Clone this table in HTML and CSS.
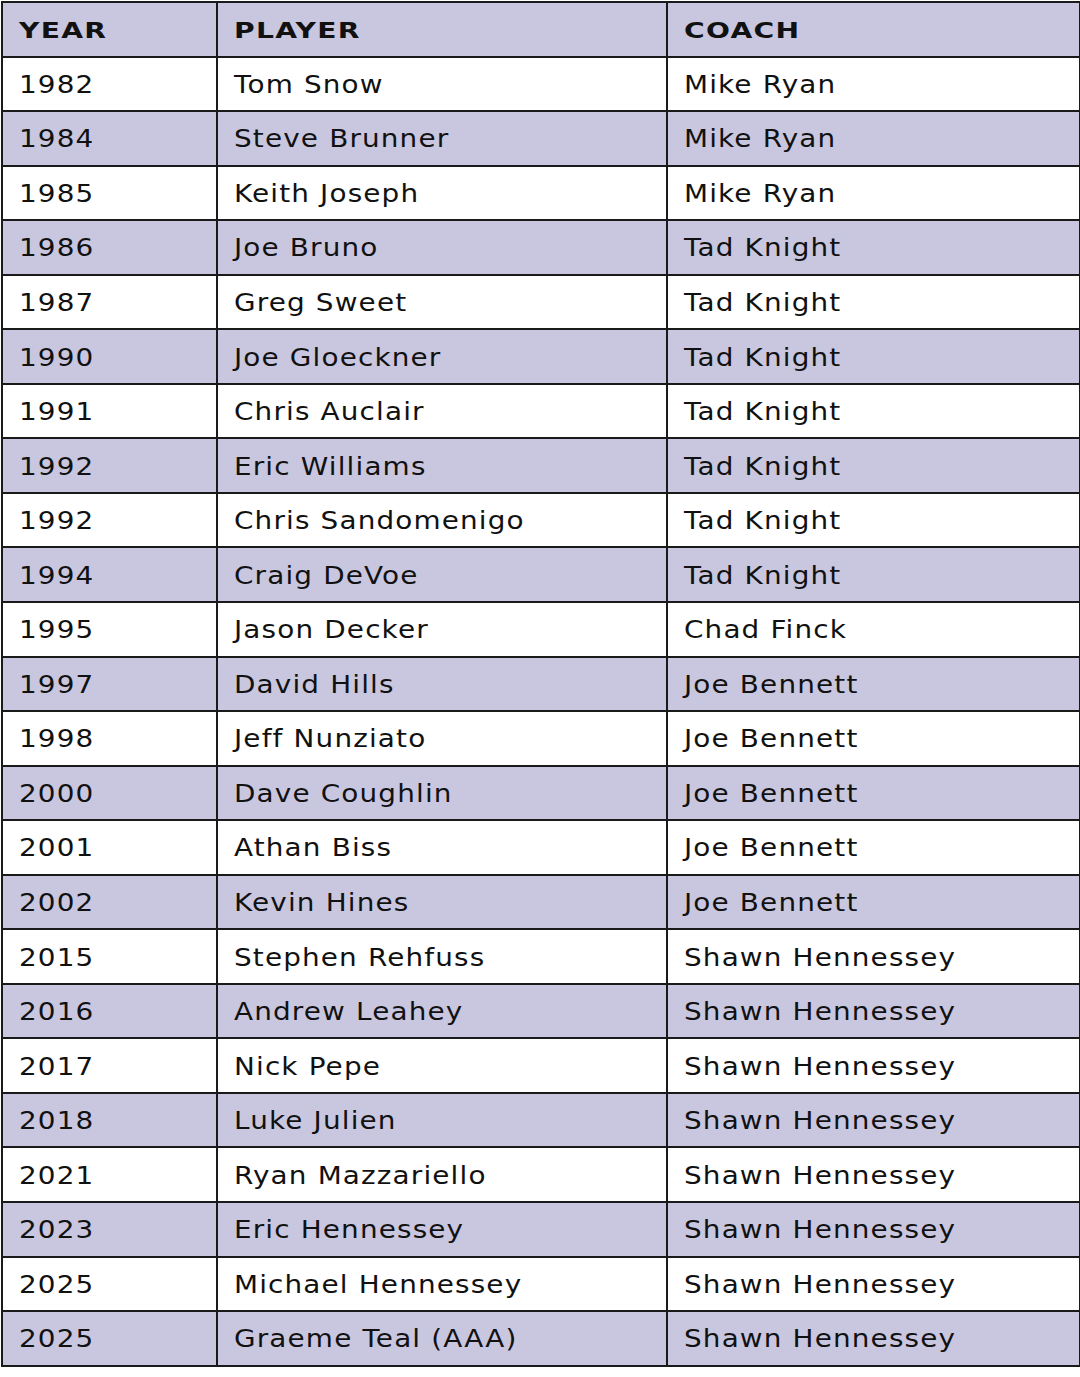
FILE: index.html
```html
<!DOCTYPE html>
<html>
<head>
<meta charset="utf-8">
<link rel="stylesheet" href="styles.css">
</head>
<body>
<table class="roster">
<colgroup><col class="c-year"><col class="c-player"><col class="c-coach"></colgroup>
<thead>
<tr><th><span class="t">YEAR</span></th><th><span class="t">PLAYER</span></th><th><span class="t">COACH</span></th></tr>
</thead>
<tbody>
<tr><td><span class="t">1982</span></td><td><span class="t">Tom Snow</span></td><td><span class="t">Mike Ryan</span></td></tr>
<tr><td><span class="t">1984</span></td><td><span class="t">Steve Brunner</span></td><td><span class="t">Mike Ryan</span></td></tr>
<tr><td><span class="t">1985</span></td><td><span class="t">Keith Joseph</span></td><td><span class="t">Mike Ryan</span></td></tr>
<tr><td><span class="t">1986</span></td><td><span class="t">Joe Bruno</span></td><td><span class="t">Tad Knight</span></td></tr>
<tr><td><span class="t">1987</span></td><td><span class="t">Greg Sweet</span></td><td><span class="t">Tad Knight</span></td></tr>
<tr><td><span class="t">1990</span></td><td><span class="t">Joe Gloeckner</span></td><td><span class="t">Tad Knight</span></td></tr>
<tr><td><span class="t">1991</span></td><td><span class="t">Chris Auclair</span></td><td><span class="t">Tad Knight</span></td></tr>
<tr><td><span class="t">1992</span></td><td><span class="t">Eric Williams</span></td><td><span class="t">Tad Knight</span></td></tr>
<tr><td><span class="t">1992</span></td><td><span class="t">Chris Sandomenigo</span></td><td><span class="t">Tad Knight</span></td></tr>
<tr><td><span class="t">1994</span></td><td><span class="t">Craig DeVoe</span></td><td><span class="t">Tad Knight</span></td></tr>
<tr><td><span class="t">1995</span></td><td><span class="t">Jason Decker</span></td><td><span class="t">Chad Finck</span></td></tr>
<tr><td><span class="t">1997</span></td><td><span class="t">David Hills</span></td><td><span class="t">Joe Bennett</span></td></tr>
<tr><td><span class="t">1998</span></td><td><span class="t">Jeff Nunziato</span></td><td><span class="t">Joe Bennett</span></td></tr>
<tr><td><span class="t">2000</span></td><td><span class="t">Dave Coughlin</span></td><td><span class="t">Joe Bennett</span></td></tr>
<tr><td><span class="t">2001</span></td><td><span class="t">Athan Biss</span></td><td><span class="t">Joe Bennett</span></td></tr>
<tr><td><span class="t">2002</span></td><td><span class="t">Kevin Hines</span></td><td><span class="t">Joe Bennett</span></td></tr>
<tr><td><span class="t">2015</span></td><td><span class="t">Stephen Rehfuss</span></td><td><span class="t">Shawn Hennessey</span></td></tr>
<tr><td><span class="t">2016</span></td><td><span class="t">Andrew Leahey</span></td><td><span class="t">Shawn Hennessey</span></td></tr>
<tr><td><span class="t">2017</span></td><td><span class="t">Nick Pepe</span></td><td><span class="t">Shawn Hennessey</span></td></tr>
<tr><td><span class="t">2018</span></td><td><span class="t">Luke Julien</span></td><td><span class="t">Shawn Hennessey</span></td></tr>
<tr><td><span class="t">2021</span></td><td><span class="t">Ryan Mazzariello</span></td><td><span class="t">Shawn Hennessey</span></td></tr>
<tr><td><span class="t">2023</span></td><td><span class="t">Eric Hennessey</span></td><td><span class="t">Shawn Hennessey</span></td></tr>
<tr><td><span class="t">2025</span></td><td><span class="t">Michael Hennessey</span></td><td><span class="t">Shawn Hennessey</span></td></tr>
<tr><td><span class="t">2025</span></td><td><span class="t">Graeme Teal (AAA)</span></td><td><span class="t">Shawn Hennessey</span></td></tr>
</tbody>
</table>
</body>
</html>
```

FILE: styles.css
```css
html, body {
  margin: 0;
  padding: 0;
  background: #ffffff;
}
body {
  padding: 1px 0 0 1px;
}
.roster {
  width: 1078px;
  border-collapse: collapse;
  table-layout: fixed;
  font-family: "DejaVu Sans", sans-serif;
  color: #111111;
  border: 2px solid #111111;
}
.c-year { width: 215px; }
.c-player { width: 450px; }
.c-coach { width: 413px; }
.roster th,
.roster td {
  border: 2px solid #1a1a1a;
  height: 54.55px;
  padding: 2px 0 0 16px;
  text-align: left;
  vertical-align: middle;
  box-sizing: border-box;
  white-space: nowrap;
}
.roster .t {
  display: inline-block;
  transform-origin: 0 50%;
}
.roster th {
  font-weight: 800;
  font-size: 22px;
  letter-spacing: 1px;
  background: #c9c7e0;
}
.roster th .t {
  transform: scaleX(1.28);
}
.roster td {
  font-size: 24px;
  font-weight: 400;
  letter-spacing: 1px;
}
.roster td .t {
  transform: scaleX(1.16);
}
.roster tbody tr:nth-child(even) td {
  background: #c9c7e0;
}
```
